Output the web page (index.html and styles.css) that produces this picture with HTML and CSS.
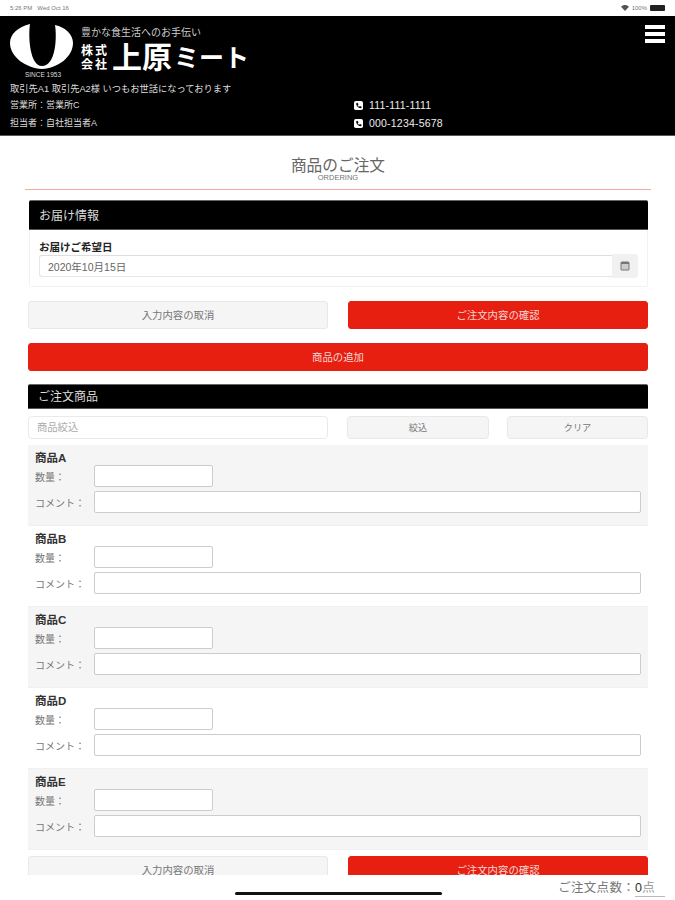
FILE: index.html
```html
<!DOCTYPE html>
<html lang="ja">
<head>
    <meta charset="utf-8" />
    <title>商品のご注文</title>
    <link rel="stylesheet" href="styles.css">
</head>
<body>
    <div class="statusbar">
        <span>5:26 PM&nbsp;&nbsp;&nbsp;Wed Oct 16</span>
        <span class="status-right">
            <svg class="wifi" viewBox="0 0 12 9"><path d="M0 2.500C3.500-.8 8.500-.8 12 2.500L6 9z" fill="#555"/></svg>
            100%
            <span class="battery"></span>
        </span>
    </div>

    <header class="site-header">
        <div class="brand">
            <svg class="logo" viewBox="0 0 64 56">
                <path d="M20 2C8 5 0 12 0 21C0 35 16 46 32 47C48 46 63 35 63 21C63 12 55 5 45 3C47 15 46 44 32 44C20 44 18 15 20 2z" fill="#fff"/>
                <text x="33" y="55" class="logo-since">SINCE 1953</text>
            </svg>
            <div class="brand-text">
                <div class="tagline">豊かな食生活へのお手伝い</div>
                <div class="company">
                    <span class="company-type">株式<br>会社</span>
                    <span class="company-name">上原</span>
                    <span class="company-name-kana">ミート</span>
                </div>
            </div>
        </div>
        <a class="hamburger"><i></i><i></i><i></i></a>
        <div class="greeting">取引先A1 取引先A2様 いつもお世話になっております</div>
        <div class="info-row">
            <span class="info-text">営業所：営業所C</span>
            <span class="phone">
                <svg viewBox="0 0 10 10"><rect width="10" height="10" rx="2" fill="#fff"/><path d="M2.500 2.500L4 2l1 2-1 .7c.4.8 1 1.400 1.800 1.800L6.500 5.500l2 1-.5 1.500C5 8.300 2 5 2.500 2.500z" fill="#000"/></svg>
                111-111-1111
            </span>
        </div>
        <div class="info-row">
            <span class="info-text">担当者：自社担当者A</span>
            <span class="phone">
                <svg viewBox="0 0 10 10"><rect width="10" height="10" rx="2" fill="#fff"/><path d="M2.500 2.500L4 2l1 2-1 .7c.4.8 1 1.400 1.800 1.800L6.500 5.500l2 1-.5 1.500C5 8.300 2 5 2.500 2.500z" fill="#000"/></svg>
                000-1234-5678
            </span>
        </div>
    </header>

    <main class="content">
        <div class="page-title">
            <h1>商品のご注文</h1>
            <p>ORDERING</p>
        </div>

        <section class="panel">
            <div class="bar">お届け情報</div>
            <div class="panel-body">
                <label class="field-label">お届けご希望日</label>
                <div class="date-group">
                    <input class="date-input" value="2020年10月15日" />
                    <span class="date-addon">
                        <svg viewBox="0 0 10 10"><rect x="0.500" y="0.500" width="9" height="9" rx="1.500" fill="#777"/><rect x="1.500" y="3" width="7" height="5.500" fill="#ccc"/></svg>
                    </span>
                </div>
            </div>
        </section>

        <div class="btn-row">
            <a class="btn">入力内容の取消</a>
            <a class="btn btn-red">ご注文内容の確認</a>
        </div>
        <a class="btn btn-red btn-add">商品の追加</a>

        <div class="bar bar-order">ご注文商品</div>
        <div class="filter-row">
            <input class="filter-input" placeholder="商品絞込" />
            <a class="btn btn-small">絞込</a>
            <a class="btn btn-small">クリア</a>
        </div>

        <div class="item odd">
            <div class="item-name">商品A</div>
            <div class="item-line"><span>数量：</span><input class="qty" /></div>
            <div class="item-line"><span>コメント：</span><input class="comment" /></div>
        </div>
        <div class="item">
            <div class="item-name">商品B</div>
            <div class="item-line"><span>数量：</span><input class="qty" /></div>
            <div class="item-line"><span>コメント：</span><input class="comment" /></div>
        </div>
        <div class="item odd">
            <div class="item-name">商品C</div>
            <div class="item-line"><span>数量：</span><input class="qty" /></div>
            <div class="item-line"><span>コメント：</span><input class="comment" /></div>
        </div>
        <div class="item">
            <div class="item-name">商品D</div>
            <div class="item-line"><span>数量：</span><input class="qty" /></div>
            <div class="item-line"><span>コメント：</span><input class="comment" /></div>
        </div>
        <div class="item odd">
            <div class="item-name">商品E</div>
            <div class="item-line"><span>数量：</span><input class="qty" /></div>
            <div class="item-line"><span>コメント：</span><input class="comment" /></div>
        </div>

        <div class="btn-row btn-row-bottom">
            <a class="btn">入力内容の取消</a>
            <a class="btn btn-red">ご注文内容の確認</a>
        </div>
    </main>

    <footer class="order-count">
        ご注文点数：<span class="count">0<span class="unit">点</span></span>
    </footer>
    <div class="home-indicator"></div>
</body>
</html>
```

FILE: styles.css
```css
* {
    box-sizing: border-box;
}

body {
    margin: 0;
    width: 675px;
    height: 900px;
    overflow: hidden;
    display: flex;
    flex-direction: column;
    position: relative;
    background: #fff;
    color: #333;
    font-family: "Liberation Sans", "Noto Sans CJK JP", sans-serif;
    font-size: 10px;
}

input {
    display: block;
    margin: 0;
    font-family: inherit;
    background: #fff;
    outline: 0;
}

/* status bar */
.statusbar {
    height: 16px;
    flex: none;
    padding: 0 10px;
    display: flex;
    justify-content: space-between;
    align-items: center;
    font-size: 6px;
    color: #777;
}

.status-right {
    display: flex;
    align-items: center;
    gap: 3px;
}

.wifi {
    width: 8px;
    height: 6px;
}

.battery {
    width: 15px;
    height: 6px;
    background: #222;
    border-radius: 1px;
}

/* header */
.site-header {
    height: 120px;
    flex: none;
    position: relative;
    background: #000;
    color: #ddd;
    padding: 6px 0 0 10px;
    border-bottom: 1px solid #555;
}

.brand {
    display: flex;
    height: 56px;
    gap: 7px;
}

.logo {
    width: 64px;
    height: 56px;
}

.logo-since {
    fill: #ddd;
    font-size: 6.500px;
    text-anchor: middle;
}

.brand-text {
    padding-top: 4px;
    color: #fff;
}

.tagline {
    font-size: 10px;
    line-height: 14px;
    color: #ccc;
}

.company {
    display: flex;
    align-items: center;
    margin-top: 4px;
}

.company-type {
    width: 31px;
    font-size: 12px;
    line-height: 14px;
    letter-spacing: 2px;
    font-weight: bold;
}

.company-name {
    font-size: 30px;
    line-height: 28px;
    font-weight: bold;
    margin-right: 2px;
}

.company-name-kana {
    font-size: 25px;
    line-height: 28px;
    font-weight: bold;
}

.hamburger {
    position: absolute;
    top: 9px;
    right: 10px;
    width: 20px;
    display: flex;
    flex-direction: column;
    gap: 3px;
}

.hamburger i {
    display: block;
    height: 4px;
    background: #fff;
}

.greeting {
    margin-top: 5px;
    font-size: 9.250px;
    line-height: 13px;
}

.info-row {
    display: flex;
    height: 18px;
    align-items: center;
    font-size: 9px;
}

.info-text {
    width: 344px;
    margin-top: -2px;
}

.phone {
    display: flex;
    align-items: center;
    gap: 6px;
    font-size: 10.500px;
    letter-spacing: 0.200px;
    color: #eee;
}

.phone svg {
    width: 9px;
    height: 9px;
}

/* content */
.content {
    flex: 1;
    min-height: 0;
    overflow: hidden;
    padding: 0 27px 0 28px;
}

.page-title {
    margin: 0 -3px 10px;
    height: 54px;
    padding-top: 20px;
    text-align: center;
    border-bottom: 1px solid #f6a99f;
    color: #666;
}

.page-title h1 {
    margin: 0;
    font-size: 15.700px;
    line-height: 20px;
    font-weight: normal;
}

.page-title p {
    margin: -2px 0 0;
    font-size: 7.500px;
    line-height: 8px;
    color: #777;
}

.bar {
    height: 30px;
    padding: 0 0 2px 10px;
    display: flex;
    align-items: center;
    background: #000;
    color: #ddd;
    font-size: 12px;
    border-radius: 2px 2px 0 0;
    border-top: 1px solid #666;
    border-bottom: 1px solid #555;
}

.panel {
    margin: 0 0 0 1px;
    height: 87px;
    border: 1px solid #f2f2f2;
    border-top: 0;
    border-radius: 2px;
}

.panel .bar {
    margin: 0 -1px;
}

.panel-body {
    padding: 10px 9px 0;
}

.field-label {
    display: block;
    padding-bottom: 1px;
    font-size: 10.500px;
    line-height: 14px;
    font-weight: bold;
    color: #222;
}

.date-group {
    display: flex;
    height: 22px;
}

.date-input {
    flex: 1;
    min-width: 0;
    height: 22px;
    padding: 0 8px;
    font-size: 10.500px;
    color: #666;
    border: 1px solid #e6e6e6;
    border-top-color: #ddd;
    border-right: 0;
    border-radius: 3px 0 0 3px;
}

.date-addon {
    width: 26px;
    height: 24px;
    margin-top: -1px;
    display: flex;
    align-items: center;
    justify-content: center;
    background: #f1f1f1;
    border-radius: 0 3px 3px 0;
}

.date-addon svg {
    width: 10px;
    height: 10px;
}

.btn {
    display: flex;
    align-items: center;
    justify-content: center;
    height: 28px;
    padding-bottom: 2px;
    font-size: 10.400px;
    color: #777;
    background: #f5f5f5;
    border: 1px solid #e8e8e8;
    border-radius: 3px;
}

.btn-red {
    color: #f6d6d2;
    background: #e71f10;
    border-color: #e71f10;
}

.btn-row {
    display: grid;
    grid-template-columns: 300px 300px;
    gap: 20px;
    margin-top: 14px;
}

.btn-add {
    margin-top: 14px;
}

.btn-row-bottom {
    margin-top: 6px;
}

.bar-order {
    height: 25px;
    margin-top: 13px;
}

.filter-row {
    display: grid;
    grid-template-columns: 301px 142px 141px;
    column-gap: 18px;
    margin-top: 7px;
    margin-bottom: 6px;
}

.filter-input {
    width: 300px;
    height: 23px;
    padding: 0 8px;
    font-size: 10.300px;
    border: 1px solid #eaeaea;
    border-radius: 4px;
}

.filter-input::placeholder {
    color: #aaa;
}

.btn-small {
    height: 23px;
    font-size: 9.200px;
    border-radius: 4px;
}

.item {
    height: 81px;
    padding: 6px 7px 0;
    border-bottom: 1px solid #f0f0f0;
}

.item.odd {
    background: #f5f5f5;
}

.item-name {
    font-size: 11.500px;
    line-height: 14px;
    font-weight: bold;
    color: #333;
}

.item-line {
    display: flex;
    align-items: center;
    margin-bottom: 4px;
    font-size: 10px;
    color: #777;
}

.item-line span {
    width: 59px;
    flex: none;
}

.item-line input {
    height: 22px;
    border: 1px solid #ccc;
    border-radius: 2px;
}

.qty {
    width: 119px;
}

.comment {
    flex: 1;
    min-width: 0;
}

/* footer */
.order-count {
    height: 25px;
    flex: none;
    padding: 4px 10px 0 0;
    display: flex;
    justify-content: flex-end;
    align-items: flex-start;
    font-size: 12.500px;
    line-height: 18px;
    letter-spacing: 0.300px;
    color: #777;
}

.count {
    width: 30px;
    height: 18px;
    color: #333;
    border-bottom: 1px solid #bbb;
}

.unit {
    color: #999;
}

.home-indicator {
    position: absolute;
    left: 235px;
    bottom: 5px;
    width: 207px;
    height: 3px;
    border-radius: 2px;
    background: #111;
}
```
